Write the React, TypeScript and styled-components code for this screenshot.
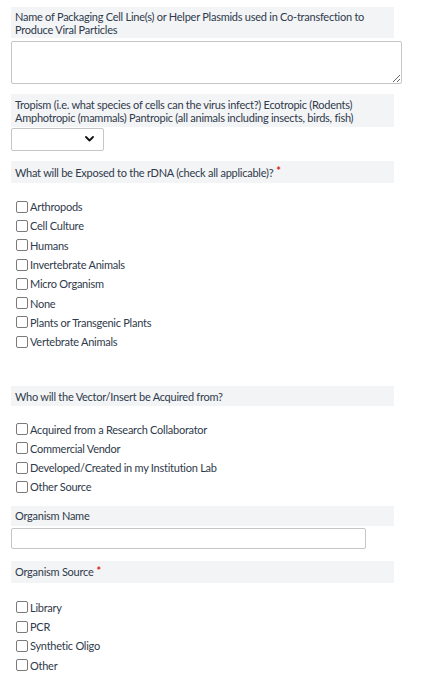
import React from "react";
import styled, { createGlobalStyle } from "styled-components";

const Global = createGlobalStyle`
  html, body { margin: 0; padding: 0; background: #fff; }
  body { font-family: Lato, "Open Sans", sans-serif; color: #2f3a4b; }
  * { box-sizing: border-box; }
`;

const Page = styled.div`
  display: flex;
  flex-direction: column;
  padding: 7px 0 0 11px;
  width: 429px;
`;

const Label = styled.div<{ $mt?: number; $h?: number }>`
  width: 383px;
  background: #f3f4f6;
  font-size: 11px;
  line-height: 13px;
  letter-spacing: -0.25px;
  padding: 2px 4px;
  min-height: ${(p) => p.$h ?? 21}px;
  display: flex;
  align-items: center;
  margin-top: ${(p) => p.$mt ?? 0}px;
`;

const Req = styled.span`
  color: #e01b1b;
  font-size: 11px;
  font-weight: 700;
  line-height: 9px;
  margin-left: 3px;
  align-self: flex-start;
  position: relative;
  top: 3px;
`;

const TextArea = styled.textarea`
  width: 391px;
  height: 43px;
  border: 1px solid #c6c6c6;
  border-radius: 2px;
  font-family: inherit;
  margin: 3px 0 0 0;
  display: block;
`;

const SelectWrap = styled.div`
  position: relative;
  width: 93px;
  height: 23px;
  margin-top: 1px;
`;

const Select = styled.select`
  appearance: none;
  width: 93px;
  height: 23px;
  border: 1px solid #c6c6c6;
  border-radius: 2px;
  background: #fff;
  margin: 0;
`;

const Chevron = styled.svg`
  position: absolute;
  right: 10px;
  top: 8px;
  pointer-events: none;
`;

const TextInput = styled.input`
  width: 355px;
  height: 21px;
  border: 1px solid #c6c6c6;
  border-radius: 2px;
  margin: 2px 0 0 0;
  display: block;
`;

const CheckList = styled.div<{ $mt: number }>`
  display: flex;
  flex-direction: column;
  margin-top: ${(p) => p.$mt}px;
`;

const CheckRow = styled.label`
  display: flex;
  align-items: center;
  height: 19.3px;
  font-size: 11px;
  letter-spacing: -0.25px;
  color: #2f3a4b;
`;

const Box = styled.span`
  width: 12px;
  height: 12px;
  border: 1px solid #7a7a7a;
  border-radius: 2px;
  margin-left: 5px;
  margin-right: 2px;
  flex: none;
  background: #fff;
`;

const Checks = ({ items, mt }: { items: string[]; mt: number }) => (
  <CheckList $mt={mt}>
    {items.map((t) => (
      <CheckRow key={t}>
        <Box />
        {t}
      </CheckRow>
    ))}
  </CheckList>
);

export default function App() {
  return (
    <>
      <Global />
      <Page>
        <Label $h={31}>
          Name of Packaging Cell Line(s) or Helper Plasmids used in Co-transfection to Produce Viral Particles
        </Label>
        <TextArea />
        <Label $h={33} $mt={10}>
          Tropism (i.e. what species of cells can the virus infect?) Ecotropic (Rodents) Amphotropic (mammals) Pantropic (all animals including insects, birds, fish)
        </Label>
        <SelectWrap>
          <Select />
          <Chevron width="9" height="6" viewBox="0 0 9 6">
            <path d="M1 1 L4.5 4.5 L8 1" fill="none" stroke="#111" strokeWidth="1.8" strokeLinecap="round" strokeLinejoin="round" />
          </Chevron>
        </SelectWrap>
        <Label $h={22} $mt={10}>
          What will be Exposed to the rDNA (check all applicable)?<Req>*</Req>
        </Label>
        <Checks
          mt={14}
          items={[
            "Arthropods",
            "Cell Culture",
            "Humans",
            "Invertebrate Animals",
            "Micro Organism",
            "None",
            "Plants or Transgenic Plants",
            "Vertebrate Animals",
          ]}
        />
        <Label $h={20} $mt={35}>
          Who will the Vector/Insert be Acquired from?
        </Label>
        <Checks
          mt={13}
          items={[
            "Acquired from a Research Collaborator",
            "Commercial Vendor",
            "Developed/Created in my Institution Lab",
            "Other Source",
          ]}
        />
        <Label $h={20} $mt={9}>
          Organism Name
        </Label>
        <TextInput />
        <Label $h={22} $mt={12}>
          Organism Source<Req>*</Req>
        </Label>
        <Checks mt={15} items={["Library", "PCR", "Synthetic Oligo", "Other"]} />
      </Page>
    </>
  );
}
